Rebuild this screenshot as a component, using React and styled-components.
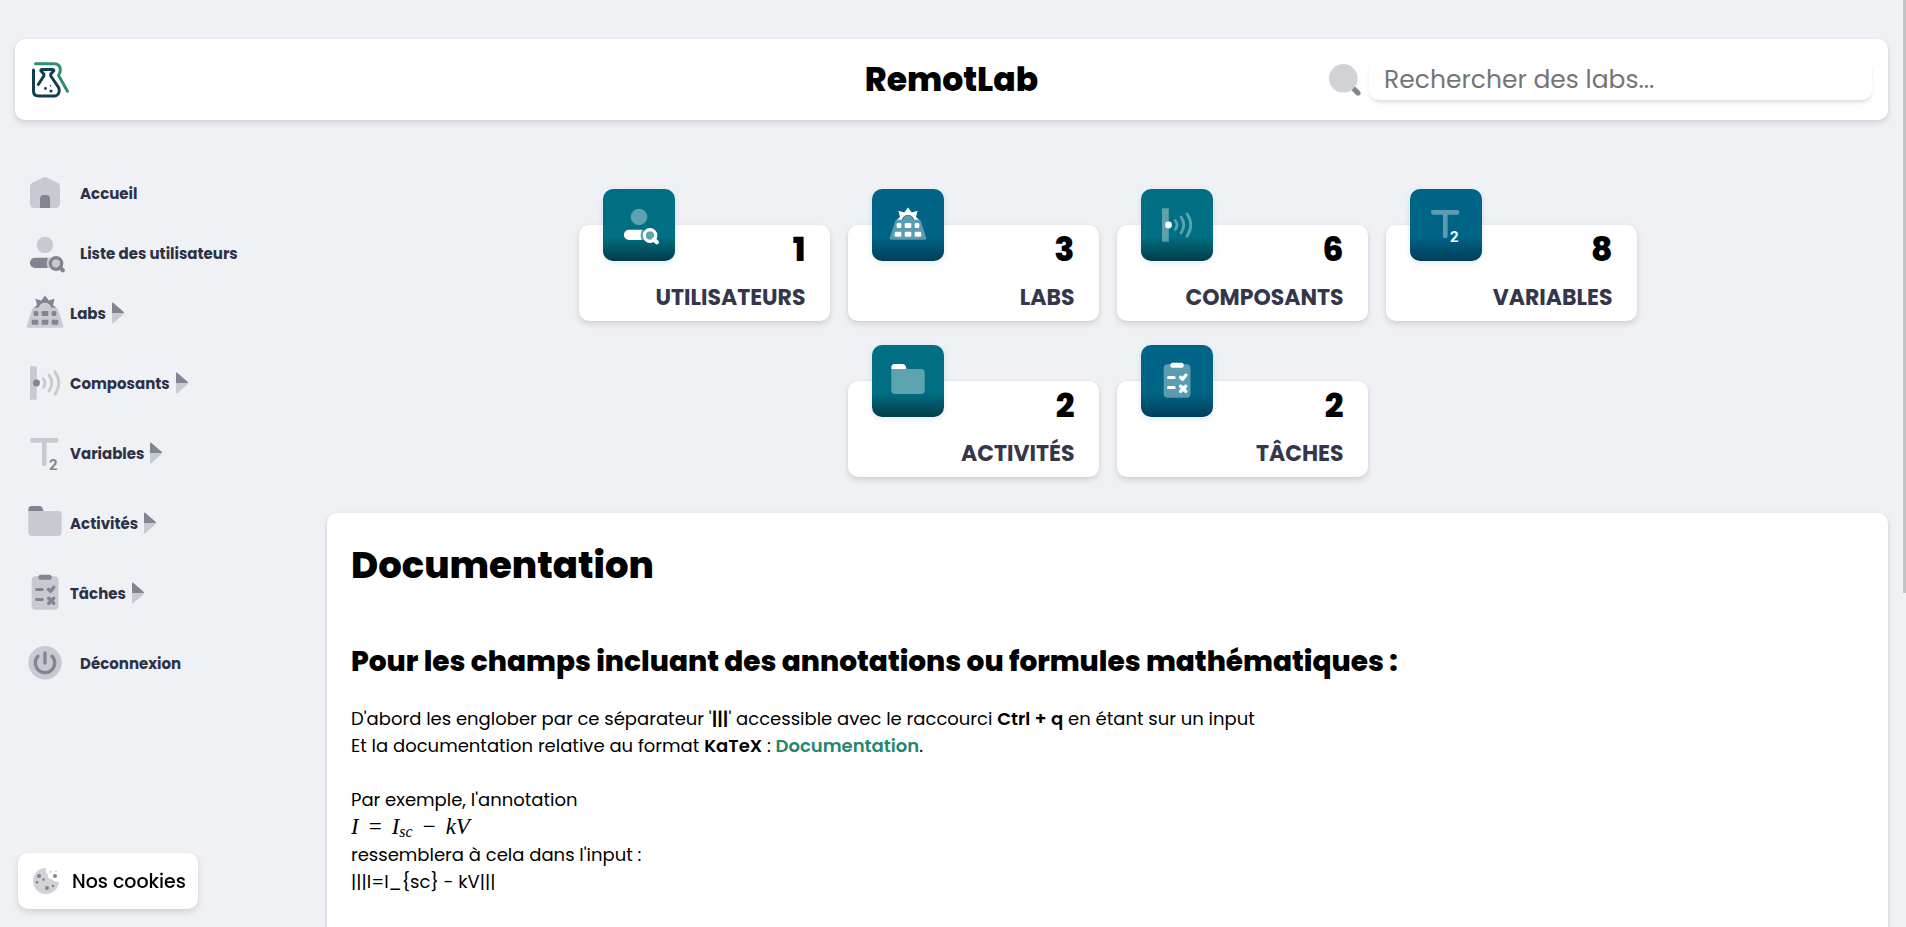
import styled, { createGlobalStyle, css } from 'styled-components';

const GlobalStyle = createGlobalStyle`
  * {
    box-sizing: border-box;
  }

  body {
    margin: 0;
    background-color: #eff1f5;
    color: #000;
    font-family: Poppins, Inter, sans-serif;
    font-size: 18px;
    line-height: 27px;
  }

  h1, h2, p {
    margin: 0;
  }
`;

const shadow = css`
  box-shadow: 0 3px 6px rgba(0, 0, 0, 0.13), 0 0 3px rgba(0, 0, 0, 0.04);
`;

const Page = styled.div`
  height: 100vh;
  overflow: hidden;
  padding: 39px 18px 0 15px;
`;

const ScrollThumb = styled.div`
  position: fixed;
  top: 0;
  right: 0;
  width: 3px;
  height: 64vh;
  background-color: #c3c5c7;
`;

const Header = styled.header`
  display: grid;
  grid-template-columns: 1fr auto 1fr;
  align-items: center;
  height: 81px;
  padding: 0 16px;
  border-radius: 10px;
  background-color: #fff;
  ${shadow}
`;

const Logo = styled.a`
  display: flex;
  width: 42px;
`;

const Brand = styled.h1`
  font-size: 33px;
  font-weight: 800;
  line-height: 48px;
`;

const Search = styled.label`
  display: flex;
  align-items: center;
  justify-content: flex-end;
  gap: 8px;

  input {
    width: 503px;
    height: 40px;
    padding: 0 15px;
    border: none;
    border-radius: 10px;
    outline: none;
    background: #fff;
    font-family: inherit;
    font-size: 25px;
    box-shadow: 0 3px 4px -1px rgba(0, 0, 0, 0.15);
  }

  input::placeholder {
    color: #757575;
  }
`;

const Content = styled.div`
  display: grid;
  grid-template-columns: 312px 1fr;
`;

const Sidebar = styled.nav`
  display: flex;
  flex-direction: column;
  padding: 43px 0 0 10px;
`;

const navItem = css`
  display: flex;
  align-items: center;
  color: #2d3146;
  font-size: 15px;
  font-weight: 700;
  text-decoration: none;

  svg {
    color: #80858f;
  }
`;

const NavLink = styled.a`
  ${navItem}
  gap: 15px;
  height: 60px;
`;

const NavGroup = styled.button`
  ${navItem}
  gap: 5px;
  height: 60px;
  margin-bottom: 10px;
  padding: 0;
  border: none;
  background: none;
  font-family: inherit;
`;

const Stats = styled.section`
  display: flex;
  flex-wrap: wrap;
  justify-content: center;
  gap: 60px 18px;
  max-width: 1200px;
  margin: 105px auto 36px;
`;

const StatCard = styled.div`
  position: relative;
  display: flex;
  flex-direction: column;
  gap: 8px;
  width: 251px;
  padding: 1px 24px 7px;
  border-radius: 10px;
  background-color: #fff;
  text-align: right;
  ${shadow}
`;

const StatIcon = styled.div`
  position: absolute;
  top: -36px;
  left: 24px;
  display: flex;
  align-items: center;
  justify-content: center;
  width: 72px;
  height: 72px;
  border-radius: 10px;
  color: #fff;
  background: ${({ $blue }) => ($blue
    ? 'linear-gradient(#006487 66%, #003f5a)'
    : 'linear-gradient(#006f83 66%, #003d49)')};
  box-shadow: 0 2px 6px rgba(0, 80, 160, 0.12);
`;

const StatValue = styled.span`
  font-size: 33px;
  font-weight: 800;
  line-height: 48px;
`;

const StatName = styled.span`
  color: #34374b;
  font-size: 22px;
  font-weight: 700;
  line-height: 32px;
  text-transform: uppercase;
`;

const Panel = styled.main`
  min-height: 600px;
  padding: 24px;
  border-radius: 10px;
  background-color: #fff;
  ${shadow}
`;

const Title = styled.h1`
  margin-bottom: 48px;
  font-size: 37px;
  font-weight: 800;
  line-height: 56px;
`;

const Subtitle = styled.h2`
  margin-bottom: 22px;
  font-size: 28px;
  font-weight: 800;
  line-height: 42px;
`;

const Text = styled.p`
  margin-bottom: 27px;

  b {
    font-weight: 600;
  }

  a {
    color: #24876b;
    font-weight: 600;
    text-decoration: none;
  }
`;

const Formula = styled.span`
  font-family: 'Liberation Serif', serif;
  font-size: 23px;
  line-height: 27px;

  sub {
    font-size: 16px;
    line-height: 0;
    vertical-align: -3px;
  }
`;

const Operator = styled.span`
  margin: 0 10px;
`;

const Cookies = styled.button`
  position: fixed;
  bottom: 18px;
  left: 18px;
  display: flex;
  align-items: center;
  gap: 13px;
  height: 56px;
  padding: 0 12px 0 15px;
  border: none;
  border-radius: 10px;
  background-color: #fff;
  color: #000;
  font-family: inherit;
  font-size: 19px;
  font-weight: 500;
  ${shadow}
`;

const Icon = ({ children }) => (
  <svg width="40" height="40" viewBox="0 0 40 40" fill="currentColor" aria-hidden="true">
    {children}
  </svg>
);

const HomeIcon = () => (
  <Icon>
    <path opacity=".36" d="M18.2 4.6Q20 3.6 21.8 4.6L33 10Q35 11 35 13.5V30Q35 35 30 35H10Q5 35 5 30V13.5Q5 11 7 10Z" />
    <path d="M15 35V26Q15 22 19 22H21Q25 22 25 26V35Z" />
  </Icon>
);

const UserIcon = () => (
  <Icon>
    <circle opacity=".36" cx="20" cy="12" r="8.3" />
    <path d="M10 24.7H23Q20.6 30 22.6 34.9H10A5.1 5.1 0 0 1 10 24.7Z" />
    <path opacity=".36" d="M22.5 24.7H25.5Q21.5 30 25 34.9H22.3Q20.3 30 22.5 24.7Z" />
    <circle opacity=".36" cx="31" cy="30.5" r="4" />
    <circle cx="31" cy="30.5" r="5.7" fill="none" stroke="currentColor" strokeWidth="3.4" />
    <path d="M35 34.5L37.8 37.3" fill="none" stroke="currentColor" strokeWidth="4.2" strokeLinecap="round" />
  </Icon>
);

const LabsIcon = () => (
  <Icon>
    <path opacity=".36" d="M9 14.7H31Q32.3 14.7 32.8 16L38.3 33Q38.6 34.7 37 34.7H3Q1.4 34.7 1.7 33L7.2 16Q7.7 14.7 9 14.7Z" />
    <path opacity=".36" d="M14.5 14.7A5.7 5.7 0 0 1 25.5 14.7Z" />
    <path d="M8.8 14.7L12 12L10.4 5.8L16.2 7.4L20 2.6L23.8 7.4L29.6 5.8L28 12L31.2 14.7H26A6.2 6.2 0 0 0 14 14.7Z" />
    <rect x="8.7" y="18" width="4.6" height="5" rx="1.3" />
    <rect x="16.7" y="18" width="6.6" height="5" rx="1" />
    <rect x="26.7" y="18" width="4.6" height="5" rx="1.3" />
    <rect x="6.7" y="26.7" width="6.6" height="5" rx="1.3" />
    <rect x="16.7" y="26.7" width="6.6" height="5" rx="1" />
    <rect x="26.7" y="26.7" width="6.6" height="5" rx="1.3" />
  </Icon>
);

const SensorIcon = () => (
  <Icon>
    <rect opacity=".36" x="5" y="3.3" width="6.8" height="33.4" />
    <g opacity=".36" fill="none" stroke="currentColor" strokeWidth="2.8" strokeLinecap="round">
      <path d="M18.3 15.5Q21.8 20 18.3 24.5" />
      <path d="M24 12Q29.5 20 24 28" />
      <path d="M30 8.8Q37.5 20 30 31.2" />
    </g>
    <circle cx="11.5" cy="20" r="3.4" />
  </Icon>
);

const VariableIcon = () => (
  <Icon>
    <path opacity=".36" d="M7.3 5H31.2A2.3 2.3 0 0 1 31.2 9.7H21.6V31A2.3 2.3 0 0 1 17 31V9.7H7.3A2.3 2.3 0 0 1 7.3 5Z" />
    <text x="24" y="37" fontFamily="Roboto, sans-serif" fontSize="15" fontWeight="700">2</text>
  </Icon>
);

const FolderIcon = () => (
  <Icon>
    <path opacity=".36" d="M3.3 8H33Q36.7 8 36.7 11.7V29Q36.7 33 32.7 33H7.3Q3.3 33 3.3 29Z" />
    <path d="M3.3 8V6.5Q3.3 3 6.8 3H14.5Q16.8 3 17.6 5L18.5 8Z" />
  </Icon>
);

const TasksIcon = () => (
  <Icon>
    <rect opacity=".36" x="6.7" y="3.3" width="26.8" height="33.5" rx="4" />
    <rect x="13.3" y="1.7" width="13.5" height="5" rx="2.5" />
    <g fill="none" stroke="currentColor" strokeWidth="3" strokeLinecap="round">
      <path d="M11.5 16.6H17.2M11.5 26.6H17.2" />
      <path d="M23.5 16.3L25.6 18.2L28.8 14.2" strokeWidth="3.4" strokeLinejoin="round" />
      <path d="M23.7 25.2L28.7 30.2M28.7 25.2L23.7 30.2" strokeWidth="3.4" />
    </g>
  </Icon>
);

const PowerIcon = () => (
  <Icon>
    <circle opacity=".36" cx="20" cy="19.7" r="16.7" />
    <g fill="none" stroke="currentColor" strokeWidth="3.3" strokeLinecap="round">
      <path d="M20 10V20" />
      <path d="M13 13.2A9.7 9.7 0 1 0 27 13.2" />
    </g>
  </Icon>
);

const SearchIcon = () => (
  <svg width="32" height="32" viewBox="0 0 32 32" aria-hidden="true">
    <circle cx="14.3" cy="14.3" r="14.3" fill="#d0d2d6" />
    <path d="M24.3 24.3L29 29" stroke="#80858f" strokeWidth="5.2" />
    <circle cx="29" cy="29" r="2.6" fill="#80858f" />
  </svg>
);

const CaretIcon = () => (
  <svg width="14" height="22" viewBox="0 0 14 22" fill="currentColor" aria-hidden="true">
    <path d="M1 11V1.6Q1 0 2.5 1L12.5 9.7Q13 10.2 13 11Z" />
    <path opacity=".36" d="M1 11V20.4Q1 22 2.5 21L12.5 12.3Q13 11.8 13 11Z" />
  </svg>
);

const LogoIcon = () => (
  <svg width="42" height="42" viewBox="31 59 42 42" fill="none" strokeWidth="3" strokeLinecap="round" strokeLinejoin="round" role="img" aria-label="RemotLab">
    <path stroke="#2f8f72" d="M35.5 63.7H54Q60.3 63.7 60.3 70Q60.3 73 58.6 75.5L67.5 91.3" />
    <path stroke="#123f50" d="M33.5 70V91Q33.5 96 38.5 96H54.5Q59 95.5 59.3 90.5Q59.2 88.5 58.2 86.8L50.8 76V74L53.8 70.7Q53.8 69.5 52.5 69.5H42Q40.7 69.5 40.9 70.7L43.8 74V76L38.3 84.5" />
    <g fill="#123f50">
      <circle cx="45.5" cy="88.5" r="1.4" />
      <circle cx="51" cy="91" r="1.6" />
      <circle cx="50.5" cy="85.8" r=".8" />
    </g>
  </svg>
);

const CookieIcon = () => (
  <svg width="26" height="26" viewBox="0 0 26 26" fill="#80858f" aria-hidden="true">
    <path fill="#d0d2d6" d="M13 0A13 13 0 1 0 26 13.5Q21.5 14.5 19.5 11.5Q14.5 11.5 14.8 6.5Q12 4.5 13 0Z" />
    <circle cx="6" cy="8" r="2.1" />
    <circle cx="10.5" cy="11.5" r="1.3" />
    <circle cx="4" cy="14.3" r="1.4" />
    <circle cx="14" cy="20" r="2" />
    <circle cx="20" cy="18" r="1.3" />
    <circle cx="22" cy="8" r="2" />
    <circle cx="17.5" cy="3.7" r="1.2" fill="#d0d2d6" />
    <circle cx="23" cy="3.5" r="1" fill="#d0d2d6" />
  </svg>
);

const groups = [
  { name: 'Labs', icon: <LabsIcon /> },
  { name: 'Composants', icon: <SensorIcon /> },
  { name: 'Variables', icon: <VariableIcon /> },
  { name: 'Activités', icon: <FolderIcon /> },
  { name: 'Tâches', icon: <TasksIcon /> },
];

const stats = [
  { name: 'Utilisateurs', value: 1, icon: <UserIcon /> },
  { name: 'Labs', value: 3, icon: <LabsIcon />, blue: true },
  { name: 'Composants', value: 6, icon: <SensorIcon /> },
  { name: 'Variables', value: 8, icon: <VariableIcon />, blue: true },
  { name: 'Activités', value: 2, icon: <FolderIcon /> },
  { name: 'Tâches', value: 2, icon: <TasksIcon />, blue: true },
];

function App() {
  return (
    <Page>
      <GlobalStyle />
      <Header>
        <Logo href="#"><LogoIcon /></Logo>
        <Brand>RemotLab</Brand>
        <Search>
          <SearchIcon />
          <input type="text" aria-label="Rechercher des labs" placeholder="Rechercher des labs..." />
        </Search>
      </Header>

      <Content>
        <Sidebar>
          <NavLink href="#"><HomeIcon />Accueil</NavLink>
          <NavLink href="#"><UserIcon />Liste des utilisateurs</NavLink>
          {groups.map(({ name, icon }) => (
            <NavGroup key={name} type="button">{icon}{name}<CaretIcon /></NavGroup>
          ))}
          <NavLink href="#"><PowerIcon />Déconnexion</NavLink>
        </Sidebar>

        <div>
          <Stats>
            {stats.map(({ name, value, icon, blue }) => (
              <StatCard key={name}>
                <StatIcon $blue={blue}>{icon}</StatIcon>
                <StatValue>{value}</StatValue>
                <StatName>{name}</StatName>
              </StatCard>
            ))}
          </Stats>

          <Panel>
            <Title>Documentation</Title>
            <Subtitle>Pour les champs incluant des annotations ou formules mathématiques :</Subtitle>
            <Text>
              D'abord les englober par ce séparateur '<b>|||</b>' accessible avec le raccourci <b>Ctrl + q</b> en étant sur un input
              <br />
              Et la documentation relative au format <b>KaTeX</b> : <a href="#">Documentation</a>.
            </Text>
            <Text>
              Par exemple, l'annotation
              <br />
              <Formula>
                <i>I</i><Operator>=</Operator><i>I<sub>sc</sub></i><Operator>−</Operator><i>kV</i>
              </Formula>
              <br />
              ressemblera à cela dans l'input :
              <br />
              {'|||I=I_{sc} - kV|||'}
            </Text>
          </Panel>
        </div>
      </Content>

      <Cookies type="button"><CookieIcon />Nos cookies</Cookies>
      <ScrollThumb />
    </Page>
  );
}

export default App;
